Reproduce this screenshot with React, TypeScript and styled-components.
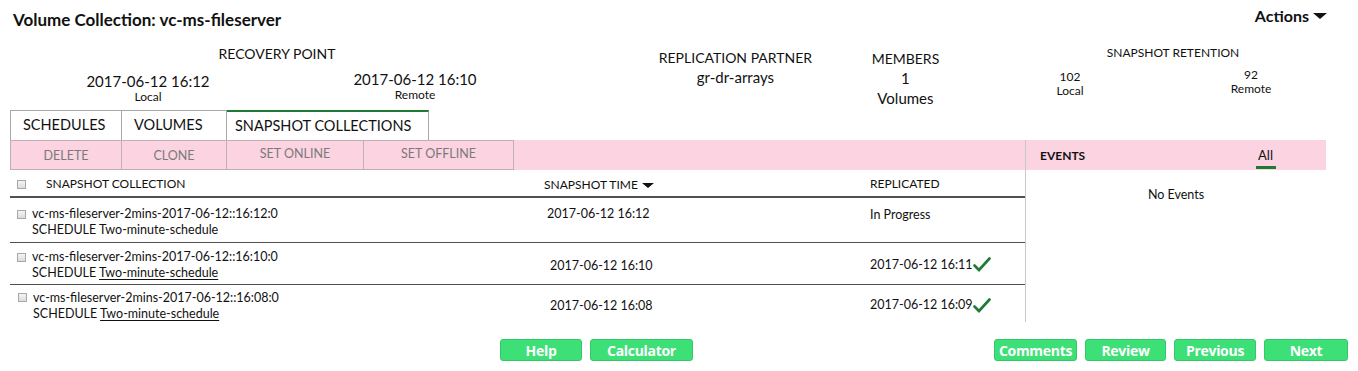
import styled, { createGlobalStyle } from 'styled-components';

const GlobalStyle = createGlobalStyle`
  body {
    margin: 0;
    background: #ffffff;
    font-family: Lato, "Open Sans", sans-serif;
    color: #111111;
  }
`;

const Page = styled.div`
  width: 1358px;
  height: 371px;
  box-sizing: border-box;
  padding: 0 10px;
  overflow: hidden;
`;

const Header = styled.div`
  display: flex;
  justify-content: space-between;
  align-items: flex-start;
`;

const Title = styled.h1`
  margin: 0 0 0 3px;
  font-size: 17px;
  font-weight: 700;
  line-height: 40px;
`;

const Actions = styled.div`
  display: flex;
  align-items: center;
  gap: 4px;
  margin-right: 21px;
  font-size: 16px;
  font-weight: 700;
  line-height: 32px;
`;

const Caret = styled.span<{ $size?: number }>`
  display: inline-block;
  width: 0;
  height: 0;
  border-left: ${p => p.$size ?? 7}px solid transparent;
  border-right: ${p => p.$size ?? 7}px solid transparent;
  border-top: ${p => (p.$size ?? 7) - 1}px solid #111;
`;

const Summary = styled.div`
  display: flex;
  height: 70px;
  text-align: center;
`;

const Block = styled.div<{ $width: number; $left?: number; $top: number }>`
  width: ${p => p.$width}px;
  margin-left: ${p => p.$left ?? 0}px;
  padding-top: ${p => p.$top}px;
  box-sizing: border-box;
`;

const Label = styled.div<{ $small?: boolean }>`
  font-size: ${p => (p.$small ? 12 : 14)}px;
  line-height: ${p => (p.$small ? 14 : 18)}px;
`;

const Value = styled.div<{ $small?: boolean; $shift?: number }>`
  font-size: ${p => (p.$small ? 12 : 15)}px;
  line-height: ${p => (p.$small ? 14 : 20)}px;
  margin-top: ${p => p.$shift ?? 0}px;
`;

const Caption = styled.div<{ $small?: boolean }>`
  font-size: 12px;
  line-height: ${p => (p.$small ? 14 : 12)}px;
`;

const Pair = styled.div<{ $cols: string; $gap: number }>`
  display: grid;
  grid-template-columns: ${p => p.$cols};
  margin-top: ${p => p.$gap}px;
`;

const Tabs = styled.div`
  display: flex;
  height: 30px;
`;

const Tab = styled.div<{ $width: number; $active?: boolean }>`
  width: ${p => p.$width}px;
  box-sizing: border-box;
  padding-left: ${p => (p.$active ? 8 : 12)}px;
  font-size: 14.5px;
  line-height: 28px;
  border: 1px solid #a8a8a8;
  border-bottom: none;
  border-top: ${p => (p.$active ? '2px solid #1f7a35' : '1px solid #a8a8a8')};
  & + & {
    border-left: none;
  }
`;

const Main = styled.div`
  display: flex;
  height: 182px;
`;

const LeftPanel = styled.div`
  width: 1015px;
  border-right: 1px solid #c8c8c8;
`;

const RightPanel = styled.div`
  width: 300px;
`;

const Toolbar = styled.div`
  display: flex;
  height: 30px;
  background: #fbd3e1;
`;

const ToolButton = styled.div<{ $width: number; $line?: number }>`
  width: ${p => p.$width}px;
  box-sizing: border-box;
  border: 1px solid #c0b0b6;
  color: #7a7a7a;
  font-size: 12.5px;
  text-align: center;
  line-height: ${p => p.$line ?? 30}px;
  & + & {
    border-left: none;
  }
`;

const Grid = styled.div<{ $border?: string; $align?: string }>`
  display: grid;
  grid-template-columns: 532px 326px 1fr;
  align-items: ${p => p.$align ?? 'center'};
  border-bottom: ${p => p.$border ?? 'none'};
`;

const HeadRow = styled(Grid)`
  height: 26px;
  font-size: 12px;
  line-height: 26px;
`;

const Row = styled(Grid)<{ $height: number; $top: number }>`
  height: ${p => p.$height}px;
  box-sizing: border-box;
  padding-top: ${p => p.$top}px;
  font-size: 12.5px;
`;

const Cell = styled.div<{ $left: number; $top?: number; $gap?: number }>`
  display: flex;
  align-items: center;
  gap: ${p => p.$gap ?? 4}px;
  padding-left: ${p => p.$left}px;
  margin-top: ${p => p.$top ?? 0}px;
`;

const Box = styled.span`
  display: inline-block;
  width: 7px;
  height: 7px;
  border: 1px solid #a8a8a8;
  background: linear-gradient(#f4f4f4, #dcdcdc);
`;

const HeadText = styled.span`
  margin-left: 16px;
`;

const NameCell = styled.div<{ $left: number }>`
  padding-left: ${p => p.$left}px;
  line-height: 16px;
`;

const NameLine = styled.div`
  display: flex;
  align-items: center;
  gap: 6px;
`;

const Schedule = styled.div`
  padding-left: 15px;
`;

const Link = styled.span`
  text-decoration: underline;
  text-underline-offset: 2px;
`;

const EventsBar = styled.div`
  display: flex;
  justify-content: space-between;
  align-items: center;
  height: 30px;
  background: #fbd3e1;
  padding: 0 53px 0 14px;
  font-size: 12px;
`;

const EventsTitle = styled.span`
  font-weight: 700;
`;

const AllFilter = styled.span`
  position: relative;
  font-size: 13px;
  line-height: 30px;
  &::after {
    content: '';
    position: absolute;
    left: -2px;
    right: -3px;
    bottom: 1px;
    height: 3px;
    background: #1f7a35;
  }
`;

const Empty = styled.div`
  text-align: center;
  font-size: 12.5px;
  margin-top: 17px;
`;

const Footer = styled.div`
  display: flex;
  margin-top: 17px;
`;

const ButtonGroup = styled.div<{ $left?: string }>`
  display: flex;
  gap: 8px;
  margin-left: ${p => p.$left ?? '0'};
`;

const GreenButton = styled.button<{ $width: number }>`
  width: ${p => p.$width}px;
  height: 22px;
  border: 1px solid #35c868;
  border-radius: 3px;
  background: #3ddf77;
  color: #ffffff;
  font-family: "Open Sans", Lato, sans-serif;
  font-size: 14px;
  font-weight: 700;
  letter-spacing: -0.3px;
  padding: 0;
`;

const Check = () => (
  <svg width="18" height="16" viewBox="0 0 18 16">
    <path d="M1.5 9.5 L6 14 L16.5 2.5" fill="none" stroke="#1f7a35" strokeWidth="2.6" strokeLinecap="round" />
  </svg>
);

const snapshots = [
  { name: 'vc-ms-fileserver-2mins-2017-06-12::16:12:0', time: '2017-06-12 16:12', rep: 'In Progress', done: false, link: false, height: 45, top: 8, align: 'start', indent: 0 },
  { name: 'vc-ms-fileserver-2mins-2017-06-12::16:10:0', time: '2017-06-12 16:10', rep: '2017-06-12 16:11', done: true, link: true, height: 42, top: 3, align: 'center', indent: 0 },
  { name: 'vc-ms-fileserver-2mins-2017-06-12::16:08:0', time: '2017-06-12 16:08', rep: '2017-06-12 16:09', done: true, link: true, height: 38, top: 3, align: 'center', indent: 1 },
];

export default function App() {
  return (
    <Page>
      <GlobalStyle />
      <Header>
        <Title>Volume Collection: vc-ms-fileserver</Title>
        <Actions>
          Actions <Caret />
        </Actions>
      </Header>

      <Summary>
        <Block $width={534} $top={5}>
          <Label>RECOVERY POINT</Label>
          <Pair $cols="276px 258px" $gap={6}>
            <div>
              <Value $shift={2}>2017-06-12 16:12</Value>
              <Caption>Local</Caption>
            </div>
            <div>
              <Value>2017-06-12 16:10</Value>
              <Caption>Remote</Caption>
            </div>
          </Pair>
        </Block>
        <Block $width={192} $left={96} $top={9}>
          <Label>REPLICATION PARTNER</Label>
          <Value>gr-dr-arrays</Value>
        </Block>
        <Block $width={150} $top={10}>
          <Label>MEMBERS</Label>
          <Value>1</Value>
          <Value>Volumes</Value>
        </Block>
        <Block $width={350} $left={18} $top={6}>
          <Label $small>SNAPSHOT RETENTION</Label>
          <Pair $cols="144px 218px" $gap={10}>
            <div>
              <Value $small>102</Value>
              <Caption $small>Local</Caption>
            </div>
            <div>
              <Value $small $shift={-2}>92</Value>
              <Caption $small>Remote</Caption>
            </div>
          </Pair>
        </Block>
      </Summary>

      <Tabs>
        <Tab $width={112}>SCHEDULES</Tab>
        <Tab $width={105}>VOLUMES</Tab>
        <Tab $width={202} $active>SNAPSHOT COLLECTIONS</Tab>
      </Tabs>

      <Main>
        <LeftPanel>
          <Toolbar>
            <ToolButton $width={112}>DELETE</ToolButton>
            <ToolButton $width={105}>CLONE</ToolButton>
            <ToolButton $width={137} $line={26}>SET ONLINE</ToolButton>
            <ToolButton $width={150} $line={26}>SET OFFLINE</ToolButton>
          </Toolbar>

          <HeadRow $border="2px solid #505050">
            <Cell $left={7}>
              <Box />
              <HeadText>SNAPSHOT COLLECTION</HeadText>
            </Cell>
            <Cell $left={2} $top={2}>
              SNAPSHOT TIME <Caret $size={6} />
            </Cell>
            <Cell $left={2}>REPLICATED</Cell>
          </HeadRow>

          {snapshots.map((s, i) => (
            <Row
              key={s.name}
              $height={s.height}
              $top={s.top}
              $align={s.align}
              $border={i < snapshots.length - 1 ? '1px solid #505050' : 'none'}
            >
              <NameCell $left={7 + s.indent}>
                <NameLine>
                  <Box />
                  <span>{s.name}</span>
                </NameLine>
                <Schedule>
                  SCHEDULE {s.link ? <Link>Two-minute-schedule</Link> : 'Two-minute-schedule'}
                </Schedule>
              </NameCell>
              <Cell $left={i === 0 ? 5 : 8}>{s.time}</Cell>
              <Cell $left={2} $top={i === 0 ? 1 : -2} $gap={0}>
                {s.rep}
                {s.done && <Check />}
              </Cell>
            </Row>
          ))}
        </LeftPanel>

        <RightPanel>
          <EventsBar>
            <EventsTitle>EVENTS</EventsTitle>
            <AllFilter>All</AllFilter>
          </EventsBar>
          <Empty>No Events</Empty>
        </RightPanel>
      </Main>

      <Footer>
        <ButtonGroup $left="490px">
          <GreenButton $width={82}>Help</GreenButton>
          <GreenButton $width={103}>Calculator</GreenButton>
        </ButtonGroup>
        <ButtonGroup $left="301px">
          <GreenButton $width={83}>Comments</GreenButton>
          <GreenButton $width={81}>Review</GreenButton>
          <GreenButton $width={82}>Previous</GreenButton>
          <GreenButton $width={84}>Next</GreenButton>
        </ButtonGroup>
      </Footer>
    </Page>
  );
}
